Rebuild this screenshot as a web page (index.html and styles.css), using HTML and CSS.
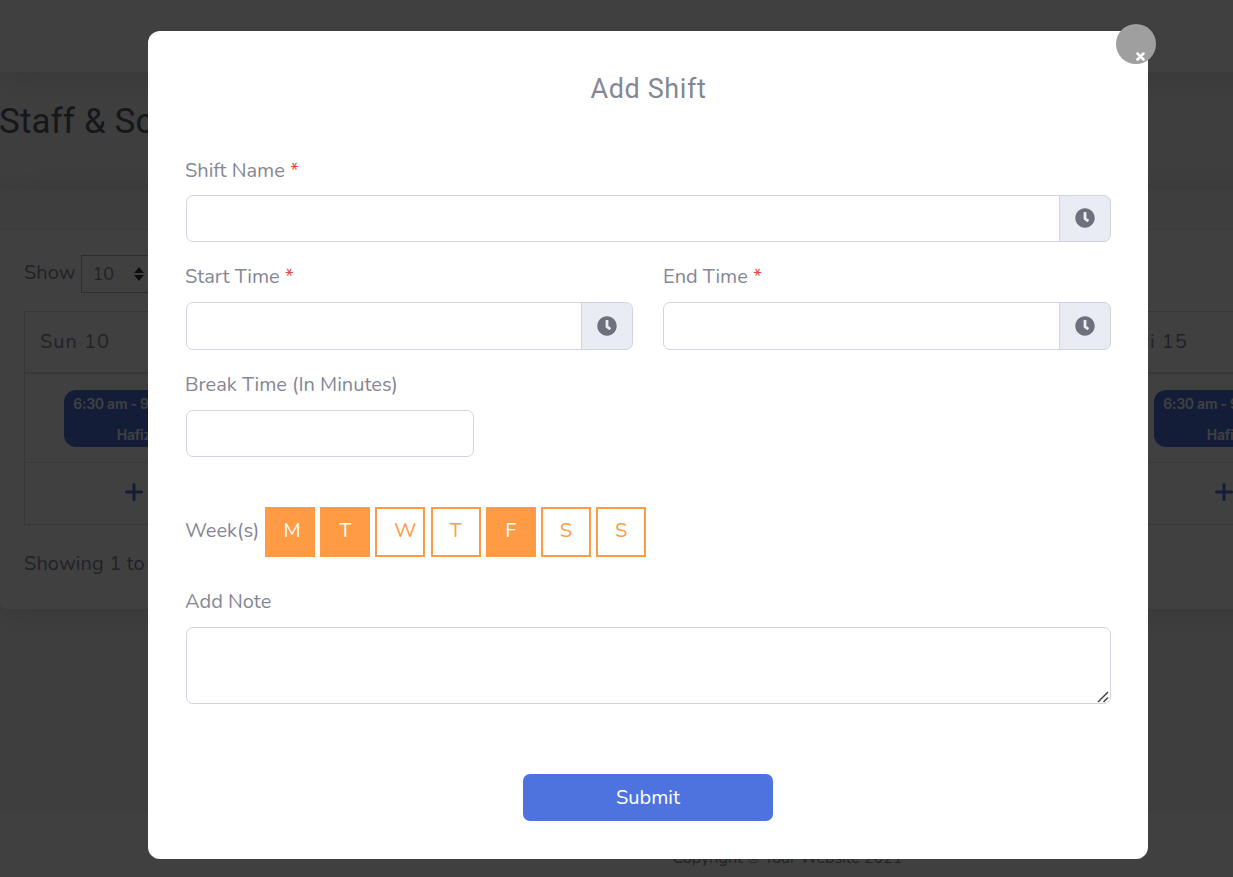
FILE: index.html
```html
<!DOCTYPE html>
<html lang="en">
<head>
<meta charset="utf-8">
<title>Staff &amp; Schedule</title>
<link rel="stylesheet" href="styles.css">
</head>
<body>
<svg class="defs" aria-hidden="true">
  <symbol id="clock" viewBox="0 0 512 512"><path fill="currentColor" d="M256 8C119 8 8 119 8 256s111 248 248 248 248-111 248-248S393 8 256 8zm57.100 350.100L224.900 294c-3.100-2.300-4.900-5.900-4.900-9.700V116c0-6.600 5.400-12 12-12h48c6.600 0 12 5.400 12 12v137.700l63.500 46.200c5.400 3.900 6.500 11.400 2.600 16.800l-28.200 38.800c-3.900 5.300-11.400 6.500-16.800 2.600z"/></symbol>
  <symbol id="plus" viewBox="0 0 18 18"><path d="M9 1.500v15M1.500 9h15" stroke="currentColor" stroke-width="3" stroke-linecap="round"/></symbol>
</svg>

<div class="page">
  <header class="topbar"></header>
  <h1 class="page-title">Staff &amp; Schedule</h1>
  <section class="card">
    <div class="card-header"></div>
    <div class="card-body">
      <div class="length"><span>Show</span>
        <span class="select">10 <svg width="10" height="14" viewBox="0 0 10 14"><path fill="currentColor" d="M5 0l5 6H0zM5 14l5-6H0z"/></svg></span>
      </div>
      <div class="schedule">
        <div class="day">Sun 10</div><div class="day">Mon 11</div><div class="day">Tue 12</div><div class="day">Wed 13</div><div class="day">Thu 14</div><div class="day">Fri 15</div>
        <div class="slot"><div class="event"><span>6:30 am - 9:30 pm</span><span>Hafiz</span></div></div>
        <div class="slot"></div><div class="slot"></div><div class="slot"></div><div class="slot"></div>
        <div class="slot"><div class="event"><span>6:30 am - 9:30 pm</span><span>Hafiz</span></div></div>
        <div class="add"><svg><use href="#plus"/></svg></div><div class="add"></div><div class="add"></div><div class="add"></div><div class="add"></div><div class="add"><svg><use href="#plus"/></svg></div>
      </div>
      <p class="info">Showing 1 to 1</p>
    </div>
  </section>
  <footer class="footer">Copyright © Your Website 2021</footer>
</div>

<div class="backdrop">
  <form class="modal">
    <button type="button" class="close" aria-label="Close"><svg width="9" height="9" viewBox="0 0 9 9"><path d="M1.500 1.500l6 6M7.500 1.500l-6 6" stroke="currentColor" stroke-width="2.500" stroke-linecap="round"/></svg></button>
    <h2 class="modal-title">Add Shift</h2>

    <div class="field field-name">
      <label class="label">Shift Name <span class="req">*</span></label>
      <div class="group"><input class="input"><span class="addon"><svg><use href="#clock"/></svg></span></div>
    </div>
    <div class="row">
      <div class="field">
        <label class="label">Start Time <span class="req">*</span></label>
        <div class="group"><input class="input"><span class="addon"><svg><use href="#clock"/></svg></span></div>
      </div>
      <div class="field">
        <label class="label">End Time <span class="req">*</span></label>
        <div class="group"><input class="input"><span class="addon"><svg><use href="#clock"/></svg></span></div>
      </div>
    </div>
    <div class="field field-break">
      <label class="label">Break Time (In Minutes)</label>
      <div class="group"><input class="input"></div>
    </div>
    <div class="weeks">
      <span class="label weeks-label">Week(s)</span>
      <div class="days">
        <span class="chip on wide-m">M</span><span class="chip on">T</span><span class="chip wide">W</span><span class="chip">T</span><span class="chip on">F</span><span class="chip">S</span><span class="chip">S</span>
      </div>
    </div>
    <div class="field">
      <label class="label note-label">Add Note</label>
      <div class="note-box"><textarea class="note"></textarea>
        <svg class="grip" width="12" height="12" viewBox="0 0 12 12"><path d="M1 11L11 1M6.500 11L11 6.500" stroke="#444" stroke-width="1.500"/></svg></div>
    </div>
    <button type="button" class="submit">Submit</button>
  </form>
</div>
</body>
</html>
```
FILE: styles.css
```css
* { box-sizing: border-box; }
body {
  margin: 0;
  height: 877px;
  overflow: hidden;
  background: #f8f8fc;
  color: #858796;
  font: 20px/30px Nunito, Lato, "Open Sans", sans-serif;
}
.defs { position: absolute; width: 0; height: 0; }

/* Schedule page */
.page { width: 1575px; height: 877px; display: flex; flex-direction: column; }
.topbar { height: 72px; flex: none; background: #fff; box-shadow: 0 3px 35px rgba(58, 59, 69, .15); }
.page-title {
  margin: 26px 0 43px -1px;
  font: 400 35px/48px Roboto, sans-serif;
  letter-spacing: 0.1px;
  color: #5a5c69;
}
.card {
  height: 420px;
  flex: none;
  border-radius: 7px;
  background: #fff;
  box-shadow: 0 3px 35px rgba(58, 59, 69, .15);
}
.card-header { height: 41px; background: #f8f8fc; border-bottom: 1px solid #e3e6f0; }
.card-body { padding: 25px 24px; }
.length { display: flex; gap: 6px; height: 38px; line-height: 35px; }
.select {
  display: flex;
  align-items: center;
  justify-content: space-between;
  width: 76px;
  padding: 0 12px 0 10px;
  border: 1px solid #b5b7c4;
  font-size: 18px;
}
.select svg { color: #343a40; }
.schedule {
  display: grid;
  grid-template-columns: repeat(6, 218px);
  grid-template-rows: 62px 89px 61px;
  width: 1527px;
  margin-top: 18px;
  border: 1px solid #d8dae5;
}
.day { padding: 15px; border-bottom: 2px solid #d8dae5; letter-spacing: 1px; }
.slot { padding: 16px 39px 0; border-bottom: 1px solid #e3e6f0; }
.event {
  display: flex;
  flex-direction: column;
  align-items: center;
  height: 57px;
  padding-top: 4px;
  border-radius: 12px;
  background: #4e73df;
  color: #fff;
  font: 600 14px/20px Inter, sans-serif;
  letter-spacing: -0.25px;
  white-space: nowrap;
  gap: 11px;
}
.add { display: flex; justify-content: center; padding-top: 20px; color: #4e73df; }
.add svg { width: 18px; height: 18px; }
.info { margin: 24px 0 0; letter-spacing: 0.1px; }
.footer {
  margin-top: 202px;
  padding-top: 34px;
  height: 66px;
  background: #fff;
  text-align: center;
  font-size: 16px;
  line-height: 26px;
}

/* Dialog */
.backdrop {
  position: fixed;
  inset: 0;
  display: flex;
  padding: 31px 0 0 148px;
  background: rgba(0, 0, 0, .75);
}
.modal {
  position: relative;
  width: 1000px;
  height: 828px;
  padding: 39px 37px 38px 38px;
  border-radius: 12px;
  background: #fff;
}
.close {
  position: absolute;
  top: -7px;
  right: -8px;
  display: flex;
  width: 40px;
  height: 40px;
  padding: 28px 0 0 20px;
  border: 0;
  border-radius: 50%;
  background: #9f9f9f;
  color: #fff;
}
.close svg { flex: none; }
.modal-title {
  margin: 0 0 47px;
  font: 400 27px/39px Roboto, sans-serif;
  letter-spacing: 0.6px;
  text-align: center;
}
.label { display: block; height: 30px; margin-left: -1px; white-space: nowrap; }
.row .field + .field .label { margin-left: 0; }
.req { color: #e74a3b; }
.group { display: flex; height: 48px; margin-top: 10px; }
.field-name .group, .field-break .group { height: 47px; }
.field-name .group { margin-top: 9px; }
.input {
  flex: 1;
  min-width: 0;
  border: 1px solid #d1d3e2;
  border-radius: 7px;
  background: #fff;
}
.input:not(:last-child) { border-radius: 7px 0 0 7px; }
.addon {
  display: flex;
  align-items: center;
  justify-content: center;
  width: 52px;
  margin-left: -1px;
  padding: 0 1px 1px 0;
  border: 1px solid #d1d3e2;
  border-radius: 0 7px 7px 0;
  background: #eaecf4;
  color: #6e707e;
}
.addon svg { width: 20px; height: 20px; }
.row { display: grid; grid-template-columns: 447px 448px; gap: 30px; margin: 20px 0; }
.field-break { width: 288px; }
.weeks { display: flex; align-items: center; height: 50px; margin: 50px 0 30px; }
.weeks-label { width: 80px; height: 32px; }
.days { display: flex; gap: 5.200px; }
.chip {
  width: 50px;
  height: 50px;
  padding: 7px 0 0;
  border: 2px solid #ff9b44;
  color: #ff9b44;
  text-align: center;
  line-height: 30px;
}
.chip.wide { padding-left: 10px; }
.chip.wide-m { padding-left: 4px; }
.chip.on { background: #ff9b44; color: #fff; }
.note-box { position: relative; height: 77px; margin-top: 10px; }
.note {
  display: block;
  width: 100%;
  height: 100%;
  border: 1px solid #d1d3e2;
  border-radius: 7px;
  resize: none;
}
.grip { position: absolute; right: 2px; bottom: 1px; }
.submit {
  display: block;
  width: 250px;
  height: 47px;
  margin: 70px 0 0 337px;
  padding: 0;
  border: 0;
  border-radius: 7px;
  background: #4e73df;
  color: #fff;
  font: inherit;
}
```
